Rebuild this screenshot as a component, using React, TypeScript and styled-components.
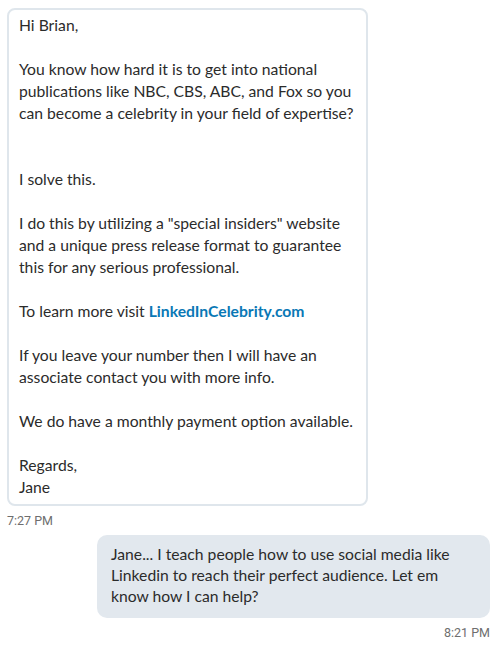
import React from "react";
import styled, { createGlobalStyle } from "styled-components";

const Global = createGlobalStyle`
  html, body { margin: 0; padding: 0; background: #ffffff; }
  body { font-family: Lato, "Noto Sans", sans-serif; }
`;

const Thread = styled.div`
  width: 496px;
  box-sizing: border-box;
  padding: 8px 6px 0 7px;
  display: flex;
  flex-direction: column;
`;

const Group = styled.div<{ $mine?: boolean }>`
  display: flex;
  flex-direction: column;
  align-items: ${(p) => (p.$mine ? "flex-end" : "flex-start")};
  margin-bottom: ${(p) => (p.$mine ? "0" : "7px")};
`;

const Bubble = styled.div<{ $mine?: boolean }>`
  box-sizing: border-box;
  width: ${(p) => (p.$mine ? "393px" : "361px")};
  border-radius: ${(p) => (p.$mine ? "10px" : "8px")};
  border: ${(p) => (p.$mine ? "none" : "2px solid #dfe6ec")};
  background: ${(p) => (p.$mine ? "#e2e8ee" : "#ffffff")};
  padding: ${(p) => (p.$mine ? "9px 14px 11px 14px" : "4px 10px 6px 10px")};
  color: #2b2b2b;
  font-size: 15.7px;
  line-height: ${(p) => (p.$mine ? "21px" : "22px")};
  white-space: pre;
`;

const Link = styled.a`
  color: #0a78b5;
  font-weight: 700;
  text-decoration: none;
`;

const Time = styled.div`
  font-family: Roboto, "Liberation Sans", sans-serif;
  font-size: 12.5px;
  line-height: 14px;
  color: #6e6e6e;
  margin-top: 8px;
`;

export default function App() {
  return (
    <>
      <Global />
      <Thread>
        <Group>
          <Bubble>
            {`Hi Brian,

You know how hard it is to get into national
publications like NBC, CBS, ABC, and Fox so you
can become a celebrity in your field of expertise?


I solve this.

I do this by utilizing a "special insiders" website
and a unique press release format to guarantee
this for any serious professional.

To learn more visit `}
            <Link href="#">LinkedInCelebrity.com</Link>
            {`

If you leave your number then I will have an
associate contact you with more info.

We do have a monthly payment option available.

Regards,
Jane`}
          </Bubble>
          <Time>7:27 PM</Time>
        </Group>
        <Group $mine>
          <Bubble $mine>
            {`Jane... I teach people how to use social media like
Linkedin to reach their perfect audience. Let em
know how I can help?`}
          </Bubble>
          <Time>8:21 PM</Time>
        </Group>
      </Thread>
    </>
  );
}
